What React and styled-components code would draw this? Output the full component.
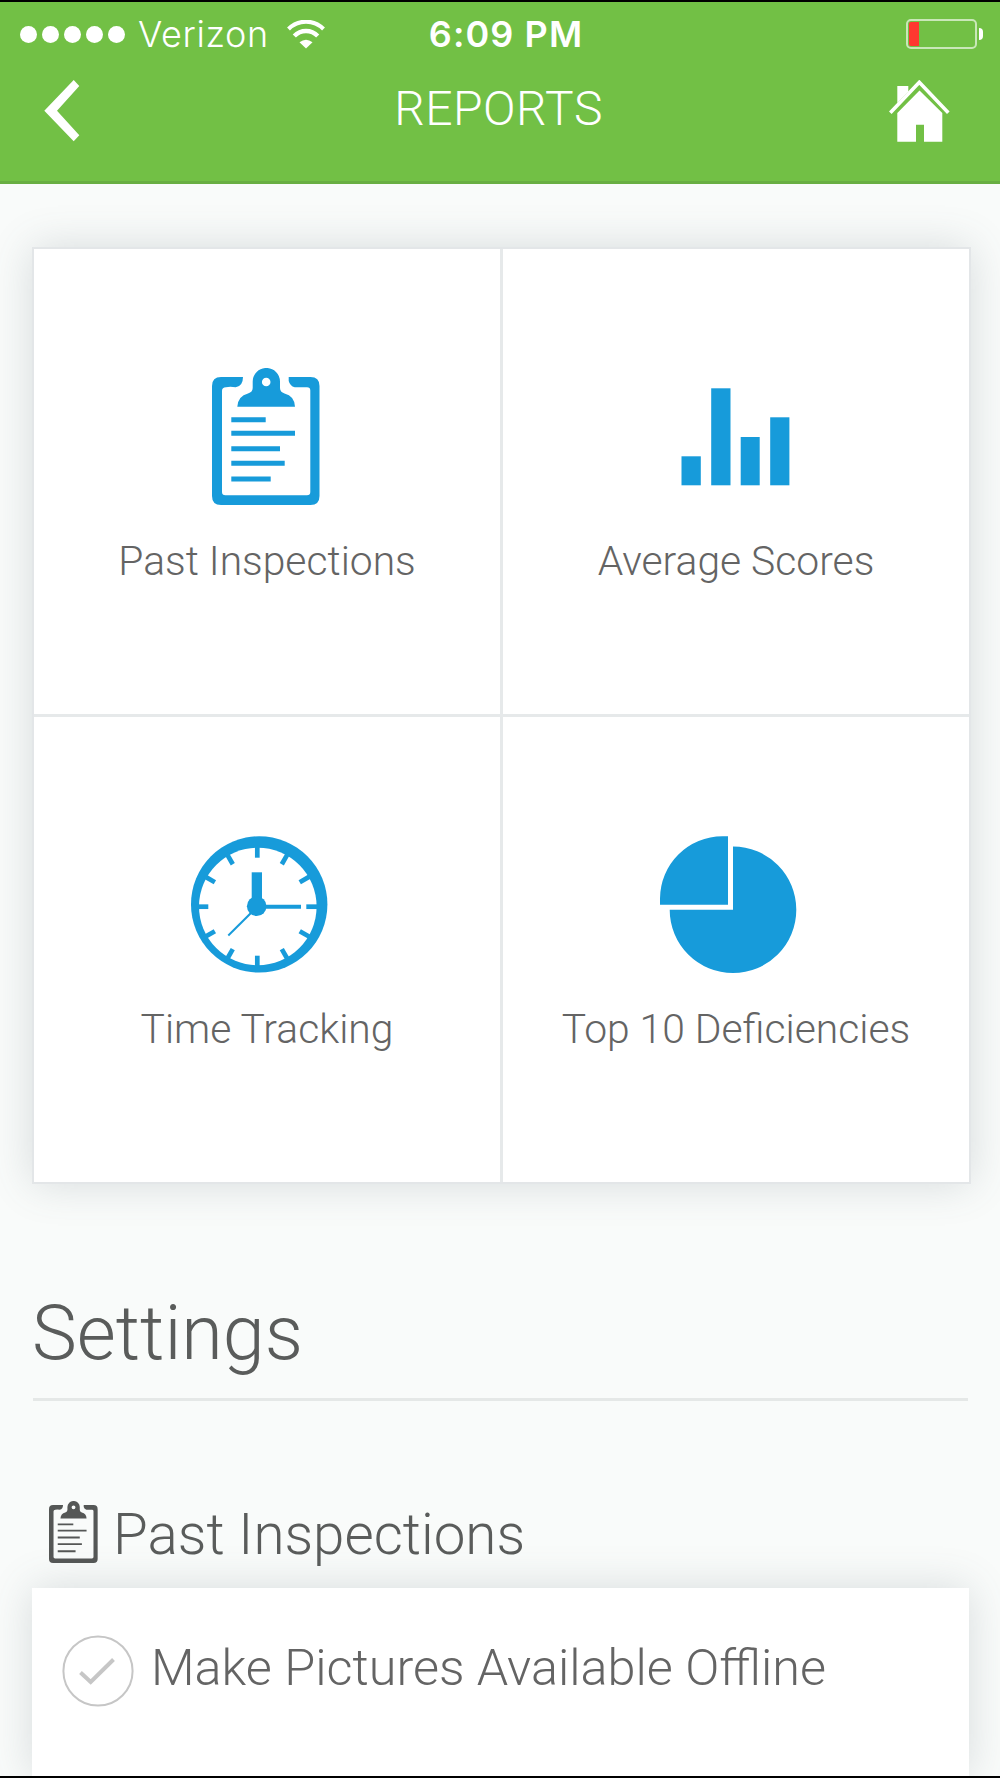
import React from 'react';
import styled, { createGlobalStyle } from 'styled-components';

const BLUE = '#179bda';
const GREY = '#555756';

const GlobalStyle = createGlobalStyle`
  * {
    box-sizing: border-box;
  }

  body {
    margin: 0;
    background: #f9fbfa;
    font-family: Roboto, 'Liberation Sans', sans-serif;
    font-weight: 300;
    color: #5a5c5b;
  }

  svg {
    display: block;
    flex: none;
  }
`;

const ClipboardIcon = ({ width, height, color, strong }) => (
  <svg
    width={width}
    height={height}
    viewBox="0 0 108 137"
    preserveAspectRatio="xMinYMid"
    fill={color}
  >
    <path d="M31 9H9Q0 9 0 18V128Q0 137 9 137H98.500Q107.500 137 107.500 128V18Q107.500 9 98.500 9H76.700V13Q78 18 82.700 19.300H95Q98.300 19.300 98.300 22.500V124Q98.300 127.300 95 127.300H13.500Q10 127.300 10 124V23Q10 19.300 14 19.300Q18 18 23.700 19.300Q31 18 31 9Z" />
    <path
      fillRule="evenodd"
      d="M25.300 38.700Q26 28 36 25.500Q40.700 24 40.700 20V13.500A13.600 13.500 0 0 1 68 13.500V20Q68 24 72.500 25.500Q82.500 28 83 38.700ZM54.200 9.700A4.300 4.300 0 1 0 54.200 18.300A4.300 4.300 0 1 0 54.200 9.700Z"
    />
    <path
      d="M19.300 51.700H53.700M19.300 65.300H83M19.300 80.700H68M19.300 95.300H72.700M19.300 111H58.700"
      stroke={color}
      strokeWidth={strong ? 4 : 5}
    />
  </svg>
);

const BarsIcon = () => (
  <svg width="152" height="137" viewBox="0 0 152 137" fill={BLUE}>
    <rect x="21.500" y="88.300" width="19.300" height="29" />
    <rect x="51.200" y="20.300" width="19.300" height="97" />
    <rect x="80.700" y="69" width="19" height="48.300" />
    <rect x="110.200" y="49.300" width="19.200" height="68" />
  </svg>
);

const TICKS = [0, 30, 60, 90, 120, 150, 180, 210, 240, 270, 300, 330];

const ClockIcon = () => (
  <svg width="152" height="137" viewBox="0 0 152 137" fill={BLUE}>
    <circle cx="68.200" cy="68.400" r="68.200" />
    <circle cx="66.800" cy="70.500" r="58.800" fill="#fff" />
    {TICKS.map(deg => (
      <path
        key={deg}
        d="M66.300 9.500V21.700"
        stroke={BLUE}
        strokeWidth="4.700"
        transform={`rotate(${deg} 66.300 70.700)`}
      />
    ))}
    <path d="M60.700 36.300H71V70H60.700Z" />
    <path d="M66 70.700H110" stroke={BLUE} strokeWidth="4" />
    <path d="M66 71L37.300 99.500" stroke={BLUE} strokeWidth="2" />
    <circle cx="65.700" cy="70.300" r="9.800" />
  </svg>
);

const PieIcon = () => (
  <svg width="152" height="137" viewBox="0 0 152 137" fill={BLUE}>
    <path d="M68 0.200H62.500A62.500 62.500 0 0 0 0 62.500V68.700H68Z" />
    <path d="M73 73.700V10.400A63.300 63.300 0 1 1 9.700 73.700Z" />
  </svg>
);

const WifiIcon = () => (
  <svg width="38" height="29" viewBox="0 0 38 29" fill="none" stroke="#fff">
    <path d="M1.500 9A24.500 24.500 0 0 1 36.500 9" strokeWidth="4" />
    <path d="M7.300 16A16.300 16.300 0 0 1 30.700 16" strokeWidth="4.400" />
    <path
      d="M12.500 22.300Q19 17 25.500 22.300L19 28.600Z"
      fill="#fff"
      stroke="none"
    />
  </svg>
);

const BackIcon = () => (
  <svg width="36" height="62" viewBox="0 0 36 62" fill="#fff">
    <path d="M29.700 0L35.300 6L13 30.700L35.300 55.300L29.700 61.300L0.300 30.700Z" />
  </svg>
);

const HomeIcon = () => (
  <svg width="61" height="62" viewBox="0 0 61 62" fill="#fff">
    <path d="M8.300 6H19.300V11.500L8.300 23Z" />
    <path
      d="M1.300 32.700L30.300 2.300L59.300 32.700"
      fill="none"
      stroke="#fff"
      strokeWidth="3.600"
    />
    <path d="M30.500 10.500L53.300 33V61.700H35V44.700H27V61.700H8.300V33Z" />
  </svg>
);

const CheckIcon = () => (
  <svg width="72" height="72" viewBox="0 0 72 72" fill="none" stroke="#c6c6c6">
    <circle cx="36" cy="36" r="34.600" strokeWidth="2" />
    <path d="M18.500 37.500L28.700 47L51.500 24.500" strokeWidth="4" />
  </svg>
);

const reports = [
  {
    label: 'Past Inspections',
    icon: <ClipboardIcon width={110} height={137} color={BLUE} />
  },
  { label: 'Average Scores', icon: <BarsIcon /> },
  { label: 'Time Tracking', icon: <ClockIcon /> },
  { label: 'Top 10 Deficiencies', icon: <PieIcon /> }
];

const App = () => (
  <Screen>
    <GlobalStyle />
    <Header>
      <StatusBar>
        <Carrier>
          <Signal>
            {[1, 2, 3, 4, 5].map(n => (
              <Dot key={n} />
            ))}
          </Signal>
          <CarrierName>Verizon</CarrierName>
          <WifiIcon />
        </Carrier>
        <Time>6:09 PM</Time>
        <Battery>
          <BatteryBody>
            <BatteryLevel />
          </BatteryBody>
          <BatteryCap />
        </Battery>
      </StatusBar>
      <NavBar>
        <BackIcon />
        <Title>REPORTS</Title>
        <HomeIcon />
      </NavBar>
    </Header>
    <Content>
      <ReportGrid>
        {reports.map(({ label, icon }) => (
          <ReportTile key={label}>
            {icon}
            <TileLabel>{label}</TileLabel>
          </ReportTile>
        ))}
      </ReportGrid>
      <SectionTitle>Settings</SectionTitle>
      <GroupTitle>
        <ClipboardIcon width={49} height={62} color={GREY} strong />
        <span>Past Inspections</span>
      </GroupTitle>
      <OptionList>
        <Option>
          <CheckIcon />
          <OptionLabel>Make Pictures Available Offline</OptionLabel>
        </Option>
      </OptionList>
    </Content>
  </Screen>
);

const Screen = styled.div`
  display: flex;
  flex-direction: column;
  width: 1000px;
  height: 1778px;
  overflow: hidden;
  border-top: 2px solid #000;
  border-bottom: 2px solid #000;
`;

const Header = styled.header`
  flex: none;
  height: 182px;
  background: #72c045;
  border-bottom: 3px solid #68ae42;
  color: #fff;
`;

const StatusBar = styled.div`
  display: grid;
  grid-template-columns: 1fr auto 1fr;
  align-items: center;
  height: 64px;
  padding: 0 17px 0 20px;
  font-family: Inter, 'Liberation Sans', sans-serif;
  font-size: 36px;
  line-height: 44px;
`;

const Carrier = styled.div`
  display: flex;
  align-items: center;
`;

const Signal = styled.div`
  display: flex;
  gap: 5px;
  margin-right: 13px;
`;

const Dot = styled.span`
  width: 17px;
  height: 17px;
  border-radius: 50%;
  background: #fff;
`;

const CarrierName = styled.span`
  width: 149px;
  font-weight: 350;
  letter-spacing: 0.6px;
`;

const Time = styled.span`
  padding-left: 9px;
  font-weight: 600;
  letter-spacing: 1.1px;
`;

const Battery = styled.div`
  display: flex;
  align-items: center;
  justify-content: flex-end;
  gap: 2px;
`;

const BatteryBody = styled.div`
  width: 71px;
  height: 30px;
  padding: 1px;
  border: 2px solid #c9e7b8;
  border-radius: 5px;
`;

const BatteryLevel = styled.div`
  width: 10px;
  height: 24px;
  border-radius: 2px 0 0 2px;
  background: #ff3830;
`;

const BatteryCap = styled.div`
  width: 4px;
  height: 12px;
  border-radius: 0 4px 4px 0;
  background: #fff;
`;

const NavBar = styled.div`
  display: flex;
  align-items: center;
  justify-content: space-between;
  padding: 14px 50px 0 44px;
`;

const Title = styled.h1`
  margin: -4px 0 0 28px;
  font-size: 48px;
  line-height: 56px;
  font-weight: 300;
  letter-spacing: 0.5px;
`;

const Content = styled.main`
  display: flex;
  flex-direction: column;
  flex: 1;
  padding: 63px 31px 0 32px;
`;

const ReportGrid = styled.section`
  display: grid;
  grid-template-columns: 466px 466px;
  grid-auto-rows: 465px;
  gap: 3px;
  width: 939px;
  border: 2px solid #e3e6e8;
  background: #e6e9ea;
  box-shadow: 0 0 40px rgba(80, 95, 105, 0.2);
`;

const ReportTile = styled.div`
  display: flex;
  flex-direction: column;
  align-items: center;
  padding-top: 119px;
  background: #fff;
`;

const TileLabel = styled.span`
  margin-top: 32px;
  font-size: 40.8px;
  line-height: 48px;
  color: #646464;
`;

const SectionTitle = styled.h2`
  width: 935px;
  height: 102px;
  margin: 115px 0 0 1px;
  border-bottom: 3px solid #e5e8e7;
  font-size: 75.500px;
  line-height: 69px;
  font-weight: 300;
  text-indent: -1px;
`;

const GroupTitle = styled.h3`
  display: flex;
  align-items: center;
  gap: 15px;
  height: 62px;
  margin: 100px 0 0 17px;
  font-size: 56.500px;
  line-height: 62px;
  font-weight: 300;

  span {
    padding-top: 5px;
  }
`;

const OptionList = styled.section`
  flex: 1;
  padding: 47px 31px 0 30px;
  margin-top: 25px;
  background: #fff;
  box-shadow: 0 0 40px rgba(80, 95, 105, 0.2);
`;

const Option = styled.label`
  display: flex;
  align-items: center;
  gap: 17px;
`;

const OptionLabel = styled.span`
  padding-bottom: 6px;
  font-size: 50.400px;
  line-height: 60px;
  color: #646464;
`;

export default App;
